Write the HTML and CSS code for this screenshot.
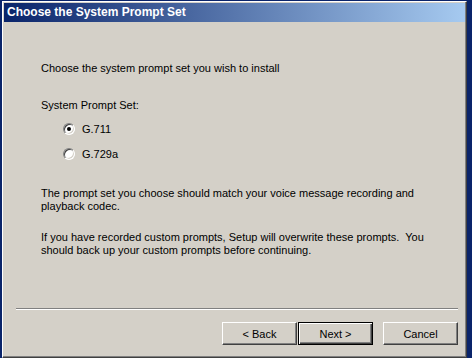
FILE: index.html
```html
<!DOCTYPE html>
<html lang="en">
<head>
    <meta charset="UTF-8">
    <title>Choose the System Prompt Set</title>
    <link rel="stylesheet" href="styles.css">
</head>
<body>
    <div class="window">
        <div class="title-bar">Choose the System Prompt Set</div>

        <div class="content">
            <p class="intro">Choose the system prompt set you wish to install</p>
            <p class="group-label">System Prompt Set:</p>

            <div class="options">
                <label class="option"><span class="radio checked"></span>G.711</label>
                <label class="option"><span class="radio"></span>G.729a</label>
            </div>

            <p class="note">The prompt set you choose should match your voice message recording and<br>playback codec.</p>
            <p class="note second">If you have recorded custom prompts, Setup will overwrite these prompts.&nbsp; You<br>should back up your custom prompts before continuing.</p>
        </div>

        <div class="footer">
            <div class="separator"></div>
            <div class="buttons">
                <button class="btn">&lt; Back</button>
                <button class="btn default">Next &gt;</button>
                <button class="btn cancel">Cancel</button>
            </div>
        </div>
    </div>
</body>
</html>
```

FILE: styles.css
```css
/* Win2000 style setup dialog */
html, body {
    margin: 0;
    padding: 0;
}
body {
    background-color: #0a246a;
    width: 472px;
    height: 358px;
    overflow: hidden;
    font-family: "Liberation Sans", Arial, sans-serif;
    font-size: 11px;
    color: #000;
}

.window {
    box-sizing: border-box;
    margin: 1px 0 0 2px;
    width: 465px;
    height: 357px;
    background-color: #d4d0c8;
    border-top: 1px solid #fff;
    border-left: 1px solid #fff;
    border-right: 1px solid #404040;
    border-bottom: 1px solid #404040;
    box-shadow: inset -1px -1px 0 #808080;
    padding: 1px;
    display: flex;
    flex-direction: column;
}

.title-bar {
    height: 19px;
    line-height: 19px;
    padding-left: 3px;
    background: linear-gradient(to right, #0a246a, #a6caf0);
    color: #fff;
    font-weight: bold;
    font-size: 12px;
    white-space: nowrap;
}

.content {
    flex: 1;
    padding: 40px 0 0 37px;
}
.content p {
    margin: 0;
    line-height: 13px;
}
.group-label {
    margin-top: 24px !important;
}

.options {
    margin: 9px 0 0 22px;
    display: flex;
    flex-direction: column;
    gap: 9px;
}
.option {
    display: flex;
    align-items: center;
    height: 16px;
    gap: 7px;
}
.radio {
    box-sizing: border-box;
    position: relative;
    width: 12px;
    height: 12px;
    border-radius: 50%;
    background-color: #fff;
    border: 1px solid;
    border-color: #808080 #fff #fff #808080;
    box-shadow: inset 1px 1px 0 #404040, inset -1px -1px 0 #d4d0c8;
}
.radio.checked::after {
    content: "";
    position: absolute;
    left: 3px;
    top: 3px;
    width: 4px;
    height: 4px;
    border-radius: 50%;
    background-color: #000;
}

.note {
    margin-top: 25px !important;
}
.note.second {
    margin-top: 18px !important;
}

.footer {
    padding: 0 7px 11px 12px;
}
.separator {
    border-top: 1px solid #808080;
    border-bottom: 1px solid #fff;
    height: 0;
}
.buttons {
    display: flex;
    justify-content: flex-end;
    margin-top: 12px;
}
.btn {
    box-sizing: border-box;
    width: 75px;
    height: 23px;
    margin: 0;
    padding: 0;
    font-family: "Liberation Sans", Arial, sans-serif;
    font-size: 11px;
    color: #000;
    background-color: #d4d0c8;
    border: 1px solid;
    border-color: #fff #404040 #404040 #fff;
    box-shadow: inset -1px -1px 0 #808080;
}
.btn.default {
    margin-left: 1px;
    border: 1px solid #000;
    box-shadow: inset 1px 1px 0 #fff, inset -1px -1px 0 #404040, inset -2px -2px 0 #808080;
}
.btn.cancel {
    margin-left: 10px;
}
```
